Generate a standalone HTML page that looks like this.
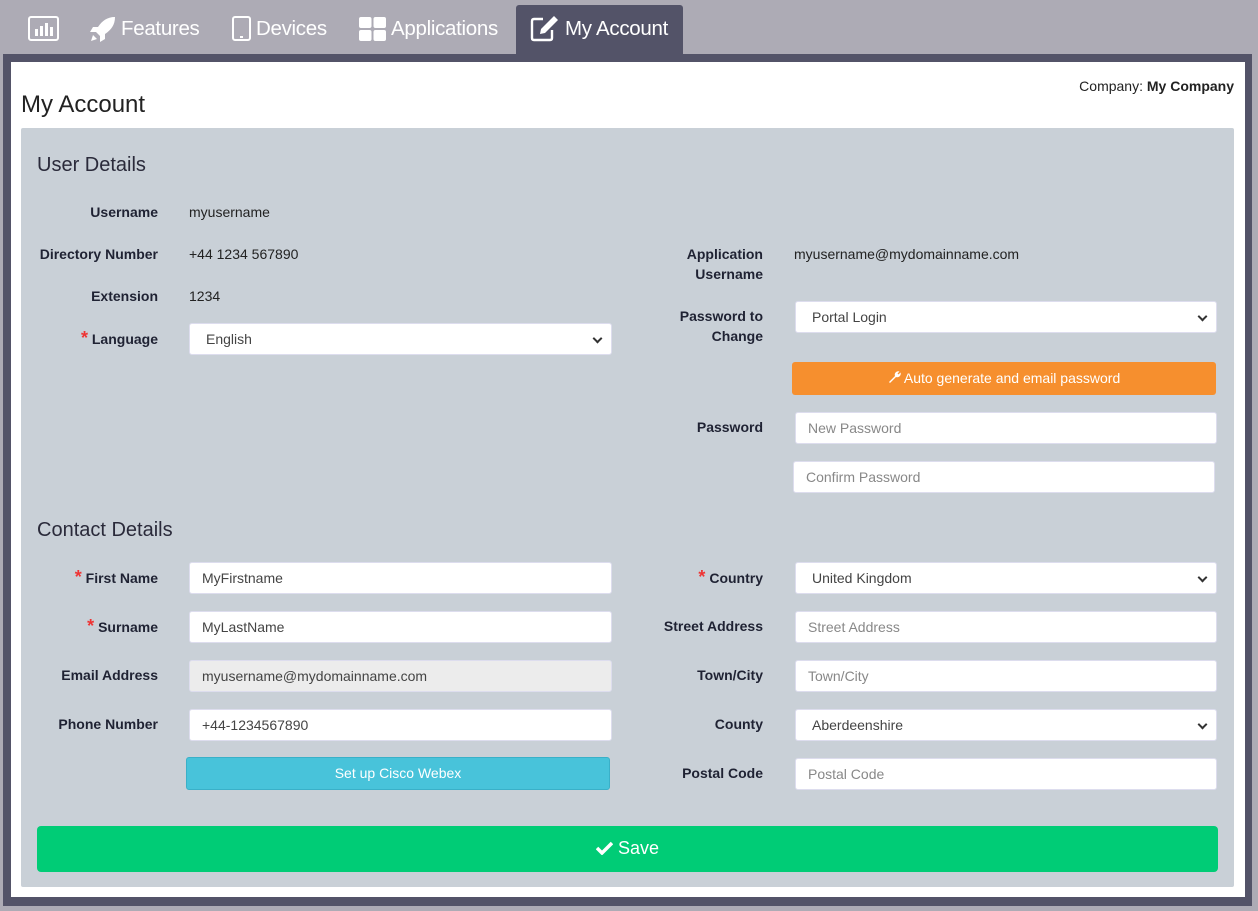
<!DOCTYPE html>
<html><head><meta charset="utf-8"><style>
*{box-sizing:border-box}
body{margin:0;width:1258px;height:911px;background:#adabb5;font-family:"Liberation Sans",sans-serif;position:relative;overflow:hidden;color:#222}
.a{position:absolute}
.nav{color:#fff;font-size:20.5px;top:17px;letter-spacing:-0.3px}
.frame{left:3px;top:54px;width:1249px;height:852px;background:#535368}
.white{left:11px;top:62px;width:1234px;height:835px;background:#fff}
.gray{left:21px;top:128px;width:1213px;height:759px;background:#c9d0d7;border-radius:2px}
.lbl{font-size:14px;font-weight:bold;text-align:right;color:#1f2233;line-height:20px}
.l{right:1100px}.r{right:495px}
.val{font-size:14px;color:#222}
.inp{height:32px;background:#fff;border:1px solid #dde;border-radius:3px;font-size:14px;color:#444;padding:0 12px;line-height:30px}
.ph{color:#888}
.sel::after{content:"";position:absolute;right:10px;top:11px;width:5px;height:5px;border-right:2px solid #333;border-bottom:2px solid #333;transform:rotate(45deg)}
.sel{padding-left:16px}
.star{color:#e33;font-size:18px}
h2{position:absolute;margin:0;font-weight:normal;font-size:20px;color:#2a2a3a}
</style></head><body>
<div class="a" style="left:516px;top:5px;width:167px;height:52px;background:#535368;border-radius:3px 3px 0 0"></div>
<svg class="a" style="left:28px;top:16px" width="31" height="25" viewBox="0 0 31 25"><rect x="1" y="1" width="29" height="23" rx="2" fill="none" stroke="#fff" stroke-width="2"/><rect x="7" y="13" width="3" height="7" fill="#fff"/><rect x="12" y="10" width="3" height="10" fill="#fff"/><rect x="17" y="7" width="3" height="13" fill="#fff"/><rect x="22" y="11" width="3" height="9" fill="#fff"/></svg>
<svg class="a" style="left:90px;top:16px" width="26" height="26" viewBox="0 0 26 26"><path d="M25 1 C17 1 12 5 8 11 L3 11 L0 16 L6 16 L10 20 L10 26 L15 23 L15 18 C21 14 25 9 25 1Z M3 19 L1 25 L7 23Z" fill="#fff"/></svg>
<div class="a nav" style="left:121px">Features</div>
<svg class="a" style="left:232px;top:16px" width="19" height="25" viewBox="0 0 19 25"><rect x="1" y="1" width="17" height="23" rx="2" fill="none" stroke="#fff" stroke-width="2"/><rect x="8" y="20" width="3" height="2" fill="#fff"/></svg>
<div class="a nav" style="left:256px">Devices</div>
<svg class="a" style="left:359px;top:17px" width="27" height="24" viewBox="0 0 27 24"><rect x="0" y="0" width="12.5" height="11" rx="2" fill="#fff"/><rect x="14.5" y="0" width="12.5" height="11" rx="2" fill="#fff"/><rect x="0" y="13" width="12.5" height="11" rx="2" fill="#fff"/><rect x="14.5" y="13" width="12.5" height="11" rx="2" fill="#fff"/></svg>
<div class="a nav" style="left:391px">Applications</div>
<svg class="a" style="left:530px;top:15px" width="29" height="27" viewBox="0 0 29 27"><path d="M13 4 H4 Q2 4 2 6 V23 Q2 25 4 25 H20 Q22 25 22 23 V15" fill="none" stroke="#fff" stroke-width="2.4"/><path d="M24 1 L28 5 L15 18 L10 19 L11 14Z" fill="#fff"/></svg>
<div class="a nav" style="left:565px">My Account</div>

<div class="a frame"></div>
<div class="a white"></div>
<div class="a" style="right:24px;top:78px;font-size:14px">Company: <b>My Company</b></div>
<div class="a" style="left:21px;top:91px;font-size:24px;color:#222">My Account</div>
<div class="a gray"></div>

<h2 style="left:37px;top:154px">User Details</h2>
<div class="a lbl l" style="top:202px">Username</div><div class="a val" style="left:189px;top:204px">myusername</div>
<div class="a lbl l" style="top:244px">Directory Number</div><div class="a val" style="left:189px;top:246px">+44 1234 567890</div>
<div class="a lbl l" style="top:286px">Extension</div><div class="a val" style="left:189px;top:288px">1234</div>
<div class="a lbl l" style="top:328px"><span class="star">*</span> Language</div>
<div class="a inp sel" style="left:189px;top:323px;width:423px">English</div>

<div class="a lbl r" style="top:244px">Application<br>Username</div><div class="a val" style="left:794px;top:246px">myusername@mydomainname.com</div>
<div class="a lbl r" style="top:306px">Password to<br>Change</div>
<div class="a inp sel" style="left:795px;top:301px;width:422px">Portal Login</div>
<div class="a" style="left:792px;top:362px;width:424px;height:33px;background:#f68f2e;border-radius:3px;color:#fff;font-size:14px;text-align:center;line-height:33px"><svg width="13" height="13" viewBox="0 0 13 13" style="vertical-align:-1px"><path d="M1 11 L7 5 A3.5 3.5 0 0 1 11.5 0.5 L9.5 2.5 L10.5 3.5 L12.5 1.5 A3.5 3.5 0 0 1 8 6 L2 12Z" fill="#fff"/></svg> Auto generate and email password</div>
<div class="a lbl r" style="top:417px">Password</div>
<div class="a inp ph" style="left:795px;top:412px;width:422px">New Password</div>
<div class="a inp ph" style="left:793px;top:461px;width:422px">Confirm Password</div>

<h2 style="left:37px;top:519px">Contact Details</h2>
<div class="a lbl l" style="top:567px"><span class="star">*</span> First Name</div>
<div class="a inp" style="left:189px;top:562px;width:423px">MyFirstname</div>
<div class="a lbl l" style="top:616px"><span class="star">*</span> Surname</div>
<div class="a inp" style="left:189px;top:611px;width:423px">MyLastName</div>
<div class="a lbl l" style="top:665px">Email Address</div>
<div class="a inp" style="left:189px;top:660px;width:423px;background:#ececec">myusername@mydomainname.com</div>
<div class="a lbl l" style="top:714px">Phone Number</div>
<div class="a inp" style="left:189px;top:709px;width:423px">+44-1234567890</div>
<div class="a" style="left:186px;top:757px;width:424px;height:33px;background:#48c3da;border:1px solid #3ab0c8;border-radius:3px;color:#fff;font-size:14px;text-align:center;line-height:31px">Set up Cisco Webex</div>

<div class="a lbl r" style="top:567px"><span class="star">*</span> Country</div>
<div class="a inp sel" style="left:795px;top:562px;width:422px">United Kingdom</div>
<div class="a lbl r" style="top:616px">Street Address</div>
<div class="a inp ph" style="left:795px;top:611px;width:422px">Street Address</div>
<div class="a lbl r" style="top:665px">Town/City</div>
<div class="a inp ph" style="left:795px;top:660px;width:422px">Town/City</div>
<div class="a lbl r" style="top:714px">County</div>
<div class="a inp sel" style="left:795px;top:709px;width:422px">Aberdeenshire</div>
<div class="a lbl r" style="top:763px">Postal Code</div>
<div class="a inp ph" style="left:795px;top:758px;width:422px">Postal Code</div>

<div class="a" style="left:37px;top:826px;width:1181px;height:46px;background:#00cc76;border-radius:4px;color:#fff;font-size:18px;text-align:center;line-height:44px"><svg width="17" height="14" viewBox="0 0 17 14" style="vertical-align:-1px"><path d="M1 7 L6 12 L16 2" fill="none" stroke="#fff" stroke-width="3.5"/></svg> Save</div>
</body></html>
